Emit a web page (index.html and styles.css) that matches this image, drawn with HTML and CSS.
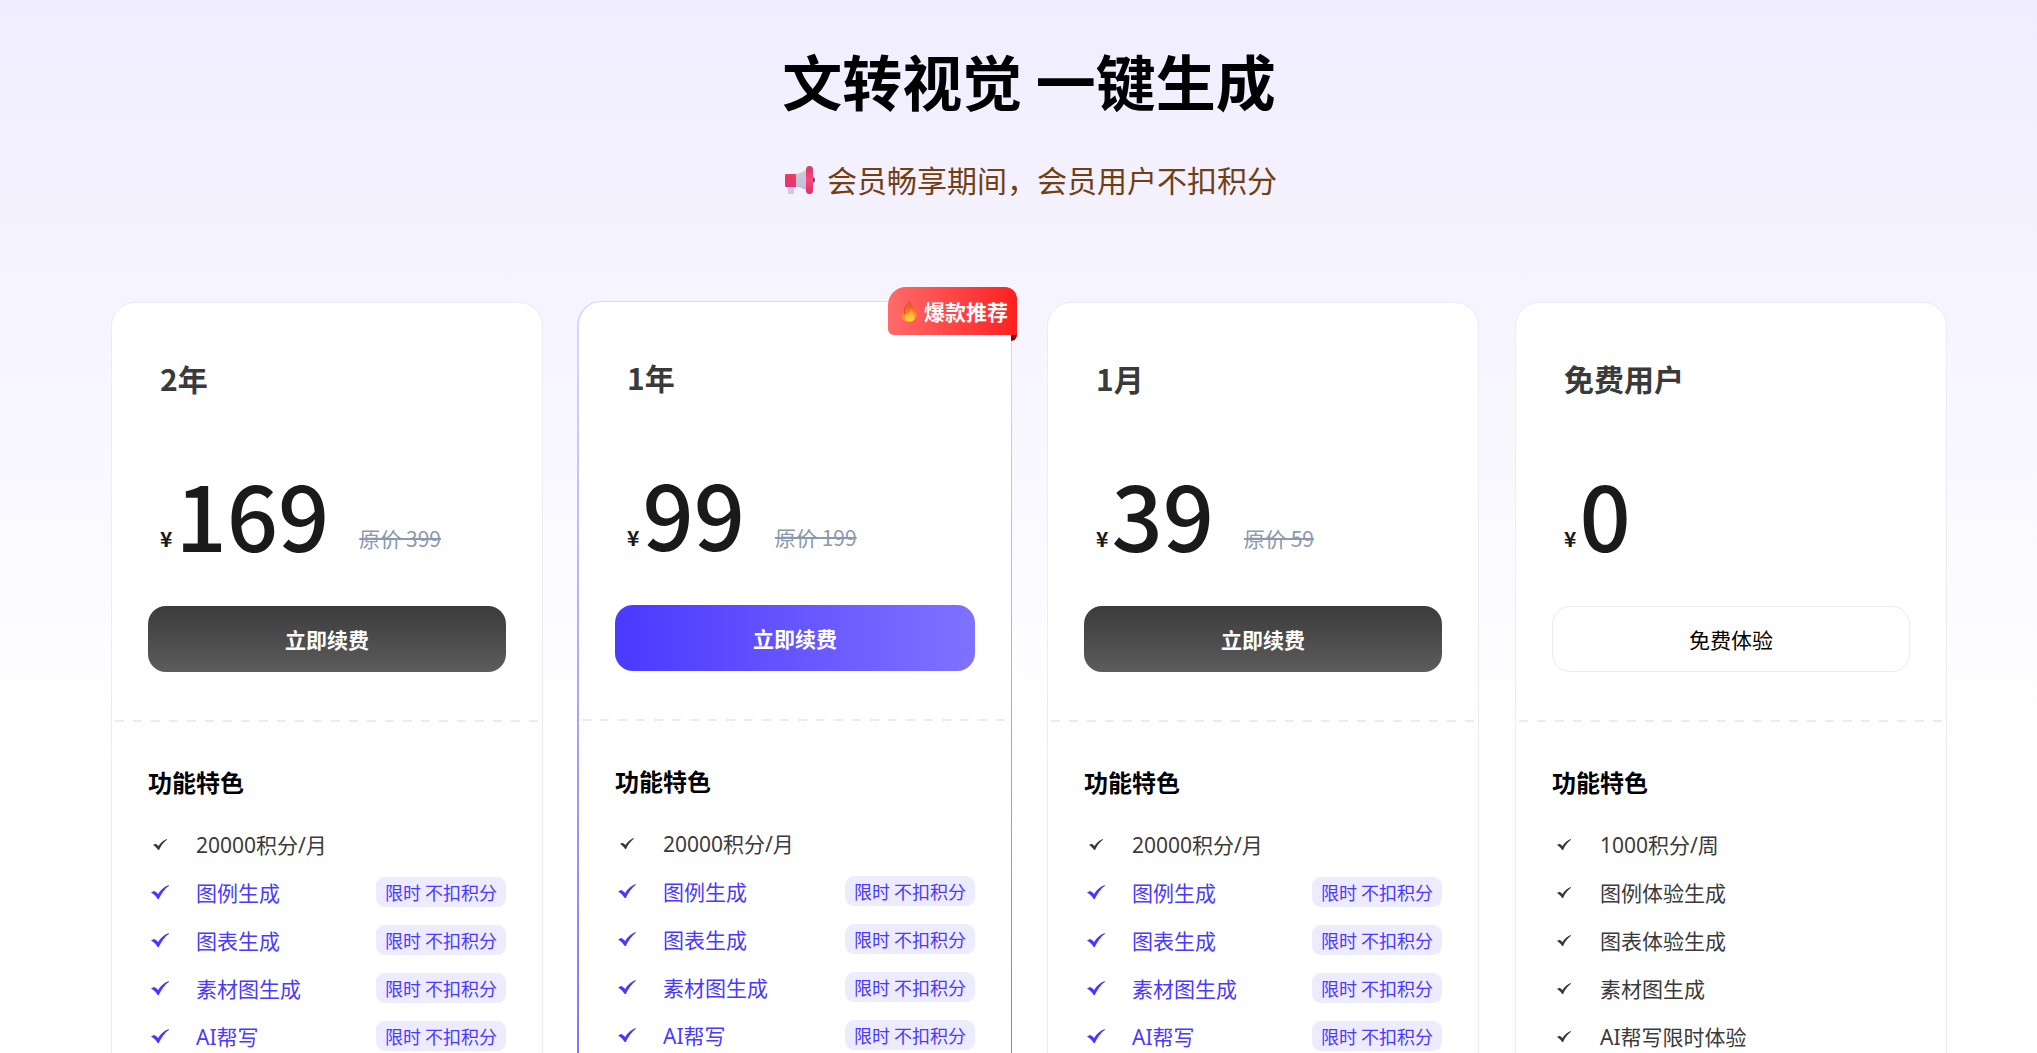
FILE: index.html
```html
<!DOCTYPE html>
<html lang="zh-CN">
<head>
<meta charset="utf-8">
<title>会员套餐</title>
<meta name="viewport" content="width=device-width, initial-scale=1">
<link rel="stylesheet" href="styles.css">
</head>
<body>
<svg class="sprite" aria-hidden="true">
  <symbol id="check" viewBox="0 0 18 14">
    <path d="M0 7.600 3 5.900C4.700 6.600 6 7.500 7 8.900 9.800 4.900 13.200 1.700 17.700 0L18 .8C13.800 4 10.500 8.200 7.800 14H6.600C4.900 11.200 2.700 9.200 0 7.600Z" fill="currentColor"/>
  </symbol>
</svg>
<main class="page">
  <header class="hero">
    <h1 class="hero-title">文转视觉 一键生成</h1>
    <p class="hero-note">
      <svg class="horn" viewBox="0 -3 30 32" aria-hidden="true">
        <defs>
          <linearGradient id="cone" x1="0" y1="0" x2="0" y2="1"><stop offset="0" stop-color="#d2d0d2"/><stop offset="1" stop-color="#c0b6dc"/></linearGradient>
          <linearGradient id="rim" x1="0" y1="0" x2="0" y2="1"><stop offset="0" stop-color="#d43a62"/><stop offset=".5" stop-color="#fb4680"/><stop offset="1" stop-color="#e02d62"/></linearGradient>
          <linearGradient id="body" x1="0" y1="0" x2="0" y2="1"><stop offset="0" stop-color="#e4405c"/><stop offset="1" stop-color="#e8307a"/></linearGradient>
        </defs>
        <path d="M3 20h6v7a1 1 0 0 1-1 1H4a1 1 0 0 1-1-1Z" fill="#cfc6e8"/>
        <circle cx="27" cy="14" r="3" fill="#5b4a63"/>
        <path d="M10 8C16 7.500 20 5 24 1v26C20 23 16 21 10 20.500Z" fill="url(#cone)"/>
        <path d="M1 8h10v13H1a1 1 0 0 1-1-1V9a1 1 0 0 1 1-1Z" fill="url(#body)"/>
        <rect x="21" y="0" width="7" height="28" rx="3.500" fill="url(#rim)"/>
      </svg>
      <span>会员畅享期间，会员用户不扣积分</span>
    </p>
  </header>

  <section class="plans" aria-label="套餐">
    <article class="plan">
      <h2 class="plan-name">2年</h2>
      <p class="price"><span class="currency">¥</span><span class="amount">169</span><s class="was">原价 399</s></p>
      <button class="cta" type="button">立即续费</button>
      <hr class="rule">
      <h3 class="features-title">功能特色</h3>
      <ul class="features">
        <li class="feature"><svg class="tick"><use href="#check"/></svg><span>20000积分/月</span></li>
        <li class="feature perk"><svg class="tick"><use href="#check"/></svg><span>图例生成</span><span class="tag">限时 不扣积分</span></li>
        <li class="feature perk"><svg class="tick"><use href="#check"/></svg><span>图表生成</span><span class="tag">限时 不扣积分</span></li>
        <li class="feature perk"><svg class="tick"><use href="#check"/></svg><span>素材图生成</span><span class="tag">限时 不扣积分</span></li>
        <li class="feature perk"><svg class="tick"><use href="#check"/></svg><span>AI帮写</span><span class="tag">限时 不扣积分</span></li>
      </ul>
    </article>

    <article class="plan plan-hot">
      <div class="ribbon">
        <svg class="flame" viewBox="0 0 16 21" aria-hidden="true">
          <defs>
            <linearGradient id="fire" x1="0" y1="0" x2="0" y2="1"><stop offset="0" stop-color="#e0452c"/><stop offset=".6" stop-color="#f5832b"/><stop offset="1" stop-color="#fca532"/></linearGradient>
            <linearGradient id="core" x1="0" y1="0" x2="0" y2="1"><stop offset="0" stop-color="#ff9a3a"/><stop offset="1" stop-color="#ffd92e"/></linearGradient>
          </defs>
          <path d="M9 0C9.500 4 16 7 16 13.500 16 18 12.500 21 8.200 21 3.800 21 0 18 0 13.500 0 10.500 1.500 9.500 2 6.500L3.500 8C5.500 6 8.500 4 9 0Z" fill="url(#fire)"/>
          <path d="M9 0C6 3 3 7 3.500 13" fill="none" stroke="#d9472f" stroke-width="1"/>
          <path d="M10.500 8C11 11 13.500 12 13.500 15.500 13.500 18.500 11.500 20.500 8.500 20.500 5.500 20.500 4 18.500 4 16.500 4 13 8 14 10.500 8Z" fill="url(#core)"/>
        </svg>
        <span>爆款推荐</span>
      </div>
      <h2 class="plan-name">1年</h2>
      <p class="price"><span class="currency">¥</span><span class="amount">99</span><s class="was">原价 199</s></p>
      <button class="cta cta-primary" type="button">立即续费</button>
      <hr class="rule">
      <h3 class="features-title">功能特色</h3>
      <ul class="features">
        <li class="feature"><svg class="tick"><use href="#check"/></svg><span>20000积分/月</span></li>
        <li class="feature perk"><svg class="tick"><use href="#check"/></svg><span>图例生成</span><span class="tag">限时 不扣积分</span></li>
        <li class="feature perk"><svg class="tick"><use href="#check"/></svg><span>图表生成</span><span class="tag">限时 不扣积分</span></li>
        <li class="feature perk"><svg class="tick"><use href="#check"/></svg><span>素材图生成</span><span class="tag">限时 不扣积分</span></li>
        <li class="feature perk"><svg class="tick"><use href="#check"/></svg><span>AI帮写</span><span class="tag">限时 不扣积分</span></li>
      </ul>
    </article>

    <article class="plan">
      <h2 class="plan-name">1月</h2>
      <p class="price"><span class="currency">¥</span><span class="amount">39</span><s class="was">原价 59</s></p>
      <button class="cta" type="button">立即续费</button>
      <hr class="rule">
      <h3 class="features-title">功能特色</h3>
      <ul class="features">
        <li class="feature"><svg class="tick"><use href="#check"/></svg><span>20000积分/月</span></li>
        <li class="feature perk"><svg class="tick"><use href="#check"/></svg><span>图例生成</span><span class="tag">限时 不扣积分</span></li>
        <li class="feature perk"><svg class="tick"><use href="#check"/></svg><span>图表生成</span><span class="tag">限时 不扣积分</span></li>
        <li class="feature perk"><svg class="tick"><use href="#check"/></svg><span>素材图生成</span><span class="tag">限时 不扣积分</span></li>
        <li class="feature perk"><svg class="tick"><use href="#check"/></svg><span>AI帮写</span><span class="tag">限时 不扣积分</span></li>
      </ul>
    </article>

    <article class="plan">
      <h2 class="plan-name">免费用户</h2>
      <p class="price"><span class="currency">¥</span><span class="amount">0</span></p>
      <button class="cta cta-plain" type="button">免费体验</button>
      <hr class="rule">
      <h3 class="features-title">功能特色</h3>
      <ul class="features">
        <li class="feature"><svg class="tick"><use href="#check"/></svg><span>1000积分/周</span></li>
        <li class="feature"><svg class="tick"><use href="#check"/></svg><span>图例体验生成</span></li>
        <li class="feature"><svg class="tick"><use href="#check"/></svg><span>图表体验生成</span></li>
        <li class="feature"><svg class="tick"><use href="#check"/></svg><span>素材图生成</span></li>
        <li class="feature"><svg class="tick"><use href="#check"/></svg><span>AI帮写限时体验</span></li>
      </ul>
    </article>
  </section>
</main>
</body>
</html>
```
FILE: styles.css
```css
* {
  box-sizing: border-box;
}

body,
h1,
h2,
h3,
p,
ul {
  margin: 0;
  padding: 0;
}

body {
  background: #fff linear-gradient(180deg, #f0edff 0, #fff 760px) no-repeat;
  color: #000;
  font-family: "Noto Sans CJK SC", sans-serif;
}

.sprite {
  display: none;
}

.page {
  padding: 36px 90px 0 111px;
}

.hero {
  display: flex;
  flex-direction: column;
  align-items: center;
  gap: 33px;
  padding-bottom: 87px;
}

.hero-title {
  font-size: 60px;
  font-weight: 700;
  line-height: 88px;
}

.hero-note {
  display: flex;
  align-items: center;
  gap: 12px;
  padding-left: 4px;
  color: #713f12;
  font-size: 30px;
  line-height: 44px;
}

.horn {
  width: 30px;
  height: 32px;
}

.plans {
  display: grid;
  grid-template-columns: repeat(4, minmax(0, 1fr));
  gap: 36px;
  padding-top: 14px;
}

.plan {
  position: relative;
  padding: 53px 36px 60px;
  border: 1px solid #ecebf6;
  border-radius: 24px;
  background: #fff;
}

.plan-hot {
  margin: -1px -1px 0 -2px;
  border-color: transparent;
  border-left-width: 2px;
  background:
    linear-gradient(#fff, #fff) padding-box,
    linear-gradient(180deg, #dcd8fd 0, #7a6cf8 100%) border-box;
}

.ribbon {
  position: absolute;
  top: -15px;
  right: -6px;
  display: flex;
  align-items: center;
  gap: 7px;
  height: 48px;
  padding: 0 9px 0 13px;
  border-radius: 18px 12px 0 6px;
  background: linear-gradient(90deg, #ff6b6b, #ff2020);
  color: #fff;
  font-size: 21px;
  font-weight: 700;
  line-height: 30px;
}

.ribbon::after {
  content: "";
  position: absolute;
  top: 100%;
  right: 0;
  width: 6px;
  height: 6px;
  border-bottom-right-radius: 6px;
  background: #a00000;
}

.flame {
  width: 16px;
  height: 21px;
}

.plan-name {
  padding-left: 12px;
  color: #3a3a3a;
  font-size: 30px;
  font-weight: 600;
  line-height: 44px;
}

.price {
  display: flex;
  align-items: flex-end;
  padding: 68px 0 48px 12px;
  color: #1a1a1a;
  line-height: 40px;
}

.currency {
  margin-right: 3px;
  font-size: 21px;
  font-weight: 600;
}

.amount {
  font-size: 90px;
  font-weight: 500;
  line-height: 90px;
}

.was {
  margin-left: 30px;
  color: #8a99b0;
  font-size: 21px;
  text-decoration-thickness: 2px;
}

.cta {
  display: block;
  width: 100%;
  height: 66px;
  border: 0;
  border-radius: 18px;
  background: linear-gradient(180deg, #3b3b3b, #5c5c5c);
  color: #fff;
  font-family: inherit;
  font-size: 21px;
  font-weight: 700;
  cursor: pointer;
}

.cta-primary {
  background: linear-gradient(90deg, #4b39ff, #8072ff);
}

.cta-plain {
  border: 1px solid #ecebf6;
  background: #fff;
  color: #000;
  font-weight: 400;
}

.rule {
  height: 2px;
  margin: 48px -33px 42px;
  border: 0;
  background: repeating-linear-gradient(90deg, #eaecf5 0 9px, transparent 9px 18px);
}

.features-title {
  margin-bottom: 20px;
  font-size: 24px;
  font-weight: 700;
  line-height: 36px;
}

.features {
  list-style: none;
}

.feature {
  display: flex;
  align-items: center;
  height: 48px;
  color: #3a3a3a;
  font-family: "Noto Sans", "Noto Sans CJK SC", sans-serif;
  font-size: 21px;
  font-weight: 400;
}

.tick {
  width: 14px;
  height: 11px;
  margin: 0 29px 0 5px;
}

.perk {
  color: #4b39ff;
}

.perk .tick {
  width: 18px;
  height: 14px;
  margin: 0 27px 0 3px;
}

.tag {
  margin-left: auto;
  padding: 0 9px;
  border-radius: 9px;
  background: #edebff;
  font-family: "Noto Sans CJK SC", sans-serif;
  font-size: 18px;
  font-weight: 400;
  line-height: 30px;
}
```
